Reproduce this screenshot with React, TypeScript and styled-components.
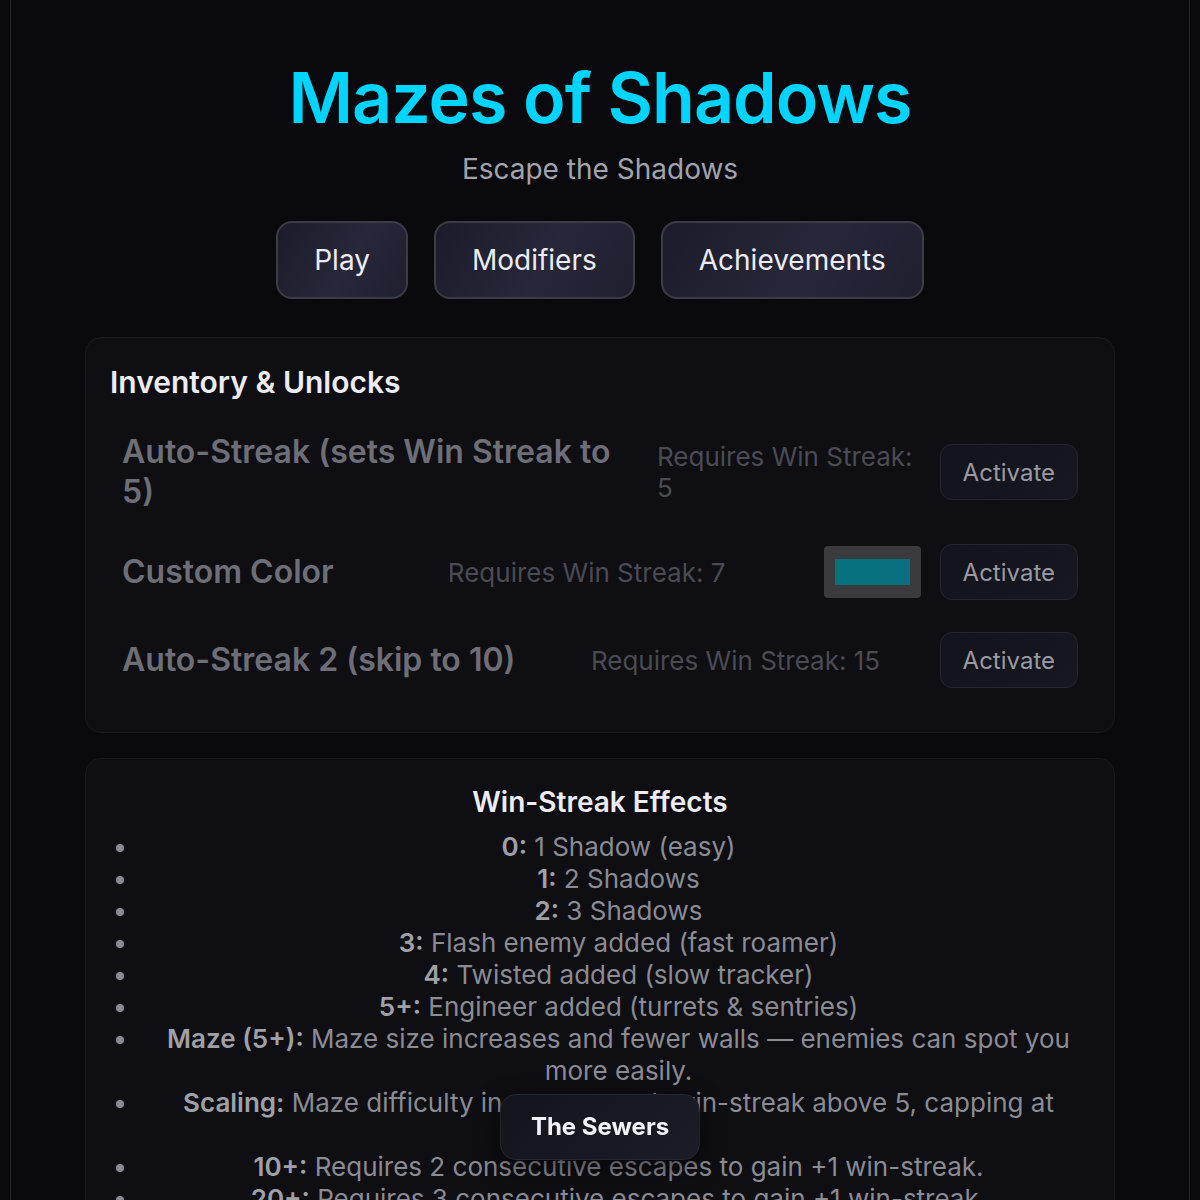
import styled, { createGlobalStyle } from 'styled-components';

const GlobalStyle = createGlobalStyle`
  body {
    margin: 0;
    background: #0a0a0e;
    color: #e6e6ee;
    font-family: Inter, "Noto Sans", sans-serif;
  }
`;

const Frame = styled.main`
  margin: -20px 10px 0;
  padding: 75px 0 60px;
  min-height: 1300px;
  border: 1px solid #27272e;
  border-radius: 20px;
  display: flex;
  flex-direction: column;
  align-items: center;
`;

const Title = styled.h1`
  margin: 0;
  font-size: 70px;
  line-height: 84px;
  font-weight: 600;
  letter-spacing: -1px;
  color: #00d4ff;
`;

const Subtitle = styled.p`
  margin: 12px 0 0;
  font-size: 28px;
  line-height: 34px;
  color: #a3a3ab;
`;

const Nav = styled.nav`
  margin-top: 35px;
  display: flex;
  gap: 26px;
`;

const NavButton = styled.button`
  height: 78px;
  padding: 0 36px;
  border: 2px solid #3c3c45;
  border-radius: 16px;
  background: linear-gradient(120deg, #1b1b2a 0%, #272739 55%, #1f1f30 100%);
  color: #ececf4;
  font-family: inherit;
  font-size: 28px;
  cursor: pointer;
`;

const Panel = styled.section<{ $gap: number }>`
  box-sizing: border-box;
  width: 1030px;
  margin-top: ${(p) => p.$gap}px;
  padding: 26px 24px 28px;
  background: #0e0e13;
  border: 1px solid #19191f;
  border-radius: 16px;
`;

const PanelTitle = styled.h2<{ $center?: boolean }>`
  margin: 0 0 ${(p) => (p.$center ? 12 : 16)}px;
  font-size: ${(p) => (p.$center ? 28 : 30)}px;
  line-height: ${(p) => (p.$center ? 34 : 36)}px;
  font-weight: 600;
  color: #ececf2;
  text-align: ${(p) => (p.$center ? 'center' : 'left')};
`;

const Row = styled.div`
  display: flex;
  align-items: center;
  justify-content: space-between;
  gap: 26px;
  padding: 16px 12px;
`;

const ItemName = styled.div`
  flex-shrink: 0.85;
  margin-right: 16px;
  font-size: 32px;
  line-height: 40px;
  font-weight: 600;
  color: #6e6e77;
`;

const Requirement = styled.div`
  font-size: 26px;
  line-height: 31px;
  color: #4b4b53;
`;

const Actions = styled.div`
  display: flex;
  align-items: center;
  gap: 19px;
  flex-shrink: 0;
`;

const Swatch = styled.div`
  box-sizing: border-box;
  width: 97px;
  height: 52px;
  padding: 13px 11px;
  background: #3a3a3f;
  border-radius: 4px;
`;

const SwatchFill = styled.div<{ $color: string }>`
  height: 100%;
  background: ${(p) => p.$color};
`;

const ActivateButton = styled.button`
  height: 56px;
  padding: 0 22px;
  border: 1px solid #26262f;
  border-radius: 12px;
  background: linear-gradient(135deg, #13131b, #171722);
  color: #9a9aa4;
  font-family: inherit;
  font-size: 24px;
  cursor: pointer;
`;

const EffectList = styled.ul`
  margin: 0 -8px 0 0;
  padding-left: 29px;
  text-align: center;
  font-size: 26px;
  line-height: 32px;
  color: #8b8b93;

  strong {
    font-weight: 600;
    color: #a0a0a8;
  }
`;

const Toast = styled.div`
  position: fixed;
  left: 50%;
  bottom: 40px;
  transform: translateX(-50%);
  padding: 16px 30px;
  border: 1px solid #262630;
  border-radius: 16px;
  background: linear-gradient(135deg, #14141c, #1c1c28);
  box-shadow: 0 8px 24px rgba(0, 0, 0, 0.5);
  font-size: 24px;
  line-height: 32px;
  font-weight: 700;
  color: #f2f2f8;
  white-space: nowrap;
`;

const unlocks = [
  { name: 'Auto-Streak (sets Win Streak to 5)', need: 5 },
  { name: 'Custom Color', need: 7, color: '#08707f' },
  { name: 'Auto-Streak 2 (skip to 10)', need: 15 },
];

const effects: [string, string][] = [
  ['0:', '1 Shadow (easy)'],
  ['1:', '2 Shadows'],
  ['2:', '3 Shadows'],
  ['3:', 'Flash enemy added (fast roamer)'],
  ['4:', 'Twisted added (slow tracker)'],
  ['5+:', 'Engineer added (turrets & sentries)'],
  ['Maze (5+):', 'Maze size increases and fewer walls — enemies can spot you more easily.'],
  ['Scaling:', 'Maze difficulty increases each win-streak above 5, capping at difficulty 20.'],
  ['10+:', 'Requires 2 consecutive escapes to gain +1 win-streak.'],
  ['20+:', 'Requires 3 consecutive escapes to gain +1 win-streak.'],
  ['30+:', 'Requires 4 consecutive escapes to gain +1 win-streak.'],
];

export default function App() {
  return (
    <>
      <GlobalStyle />
      <Frame>
        <Title>Mazes of Shadows</Title>
        <Subtitle>Escape the Shadows</Subtitle>
        <Nav>
          <NavButton>Play</NavButton>
          <NavButton>Modifiers</NavButton>
          <NavButton>Achievements</NavButton>
        </Nav>

        <Panel $gap={38}>
          <PanelTitle>Inventory &amp; Unlocks</PanelTitle>
          {unlocks.map((u) => (
            <Row key={u.name}>
              <ItemName>{u.name}</ItemName>
              <Requirement>Requires Win Streak: {u.need}</Requirement>
              <Actions>
                {u.color && (
                  <Swatch>
                    <SwatchFill $color={u.color} />
                  </Swatch>
                )}
                <ActivateButton>Activate</ActivateButton>
              </Actions>
            </Row>
          ))}
        </Panel>

        <Panel $gap={25}>
          <PanelTitle $center>Win-Streak Effects</PanelTitle>
          <EffectList>
            {effects.map(([label, text]) => (
              <li key={label}>
                <strong>{label}</strong> {text}
              </li>
            ))}
          </EffectList>
        </Panel>
      </Frame>
      <Toast>The Sewers</Toast>
    </>
  );
}
